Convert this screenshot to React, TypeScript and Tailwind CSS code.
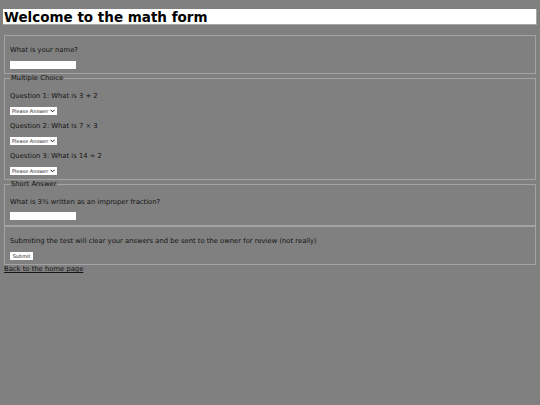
import React from "react";

function Chevron() {
  return (
    <svg width="5" height="4" viewBox="0 0 5 4" className="absolute right-[2px] top-[2px] pointer-events-none">
      <path d="M0.5 0.8 L2.5 2.8 L4.5 0.8" fill="none" stroke="#111" strokeWidth="1" />
    </svg>
  );
}

function AnswerSelect() {
  return (
    <div className="relative inline-block w-[47px] h-[8px]">
      <select
        defaultValue=""
        className="appearance-none block w-full h-full bg-white text-[5px] leading-[8px] pl-[2px] pr-[7px] py-0 text-[#222] outline-none"
      >
        <option value="">Please Answer</option>
      </select>
      <Chevron />
    </div>
  );
}

export default function App() {
  return (
    <div
      className="min-h-[405px] bg-[#808080] px-[3px] pt-[9px] text-[#151515]"
      style={{ fontFamily: '"DejaVu Sans", Verdana, sans-serif' }}
    >
      <h1 className="bg-white h-[16px] text-[13.5px] leading-[16px] font-bold text-black pl-[1px] border-r border-b border-[#a8a8a8]">
        Welcome to the math form
      </h1>

      <form className="text-[6.8px] leading-[8px]" onSubmit={(e) => e.preventDefault()}>
        <fieldset className="mt-[10px] mx-[1px] border border-[#a3a3a3] px-[5px] pt-[10px] pb-[5px] h-[39px]">
          <p>What is your name?</p>
          <input type="text" className="block mt-[7px] w-[66px] h-[8px] bg-white outline-none" />
        </fieldset>

        <fieldset className="mx-[1px] border border-[#a3a3a3] px-[5px] pb-[4px]">
          <legend className="px-[1px] leading-[8px]">Multiple Choice</legend>
          <div className="pt-[10px] flex flex-col gap-[7px]">
            <p>Question 1: What is 3 + 2</p>
            <AnswerSelect />
            <p>Question 2: What is 7 × 3</p>
            <AnswerSelect />
            <p>Question 3: What is 14 ÷ 2</p>
            <AnswerSelect />
          </div>
        </fieldset>

        <fieldset className="mx-[1px] border border-[#a3a3a3] px-[5px] pb-[5px]">
          <legend className="px-[1px] leading-[8px]">Short Answer</legend>
          <p className="pt-[10px]">What is 3¾ written as an improper fraction?</p>
          <input type="text" className="block mt-[6px] w-[66px] h-[8px] bg-white outline-none" />
        </fieldset>

        <fieldset className="mx-[1px] border border-[#a3a3a3] px-[5px] pt-[10px] pb-[4px]">
          <p>Submiting the test will clear your answers and be sent to the owner for review (not really)</p>
          <button
            type="submit"
            className="block mt-[7px] w-[23px] h-[8px] bg-white text-[5px] leading-[8px] text-center text-[#222]"
          >
            Submit
          </button>
        </fieldset>
      </form>

      <a href="#" className="block w-max pl-[1px] text-[6.8px] leading-[8px] underline text-[#151515]">
        Back to the home page
      </a>
    </div>
  );
}
